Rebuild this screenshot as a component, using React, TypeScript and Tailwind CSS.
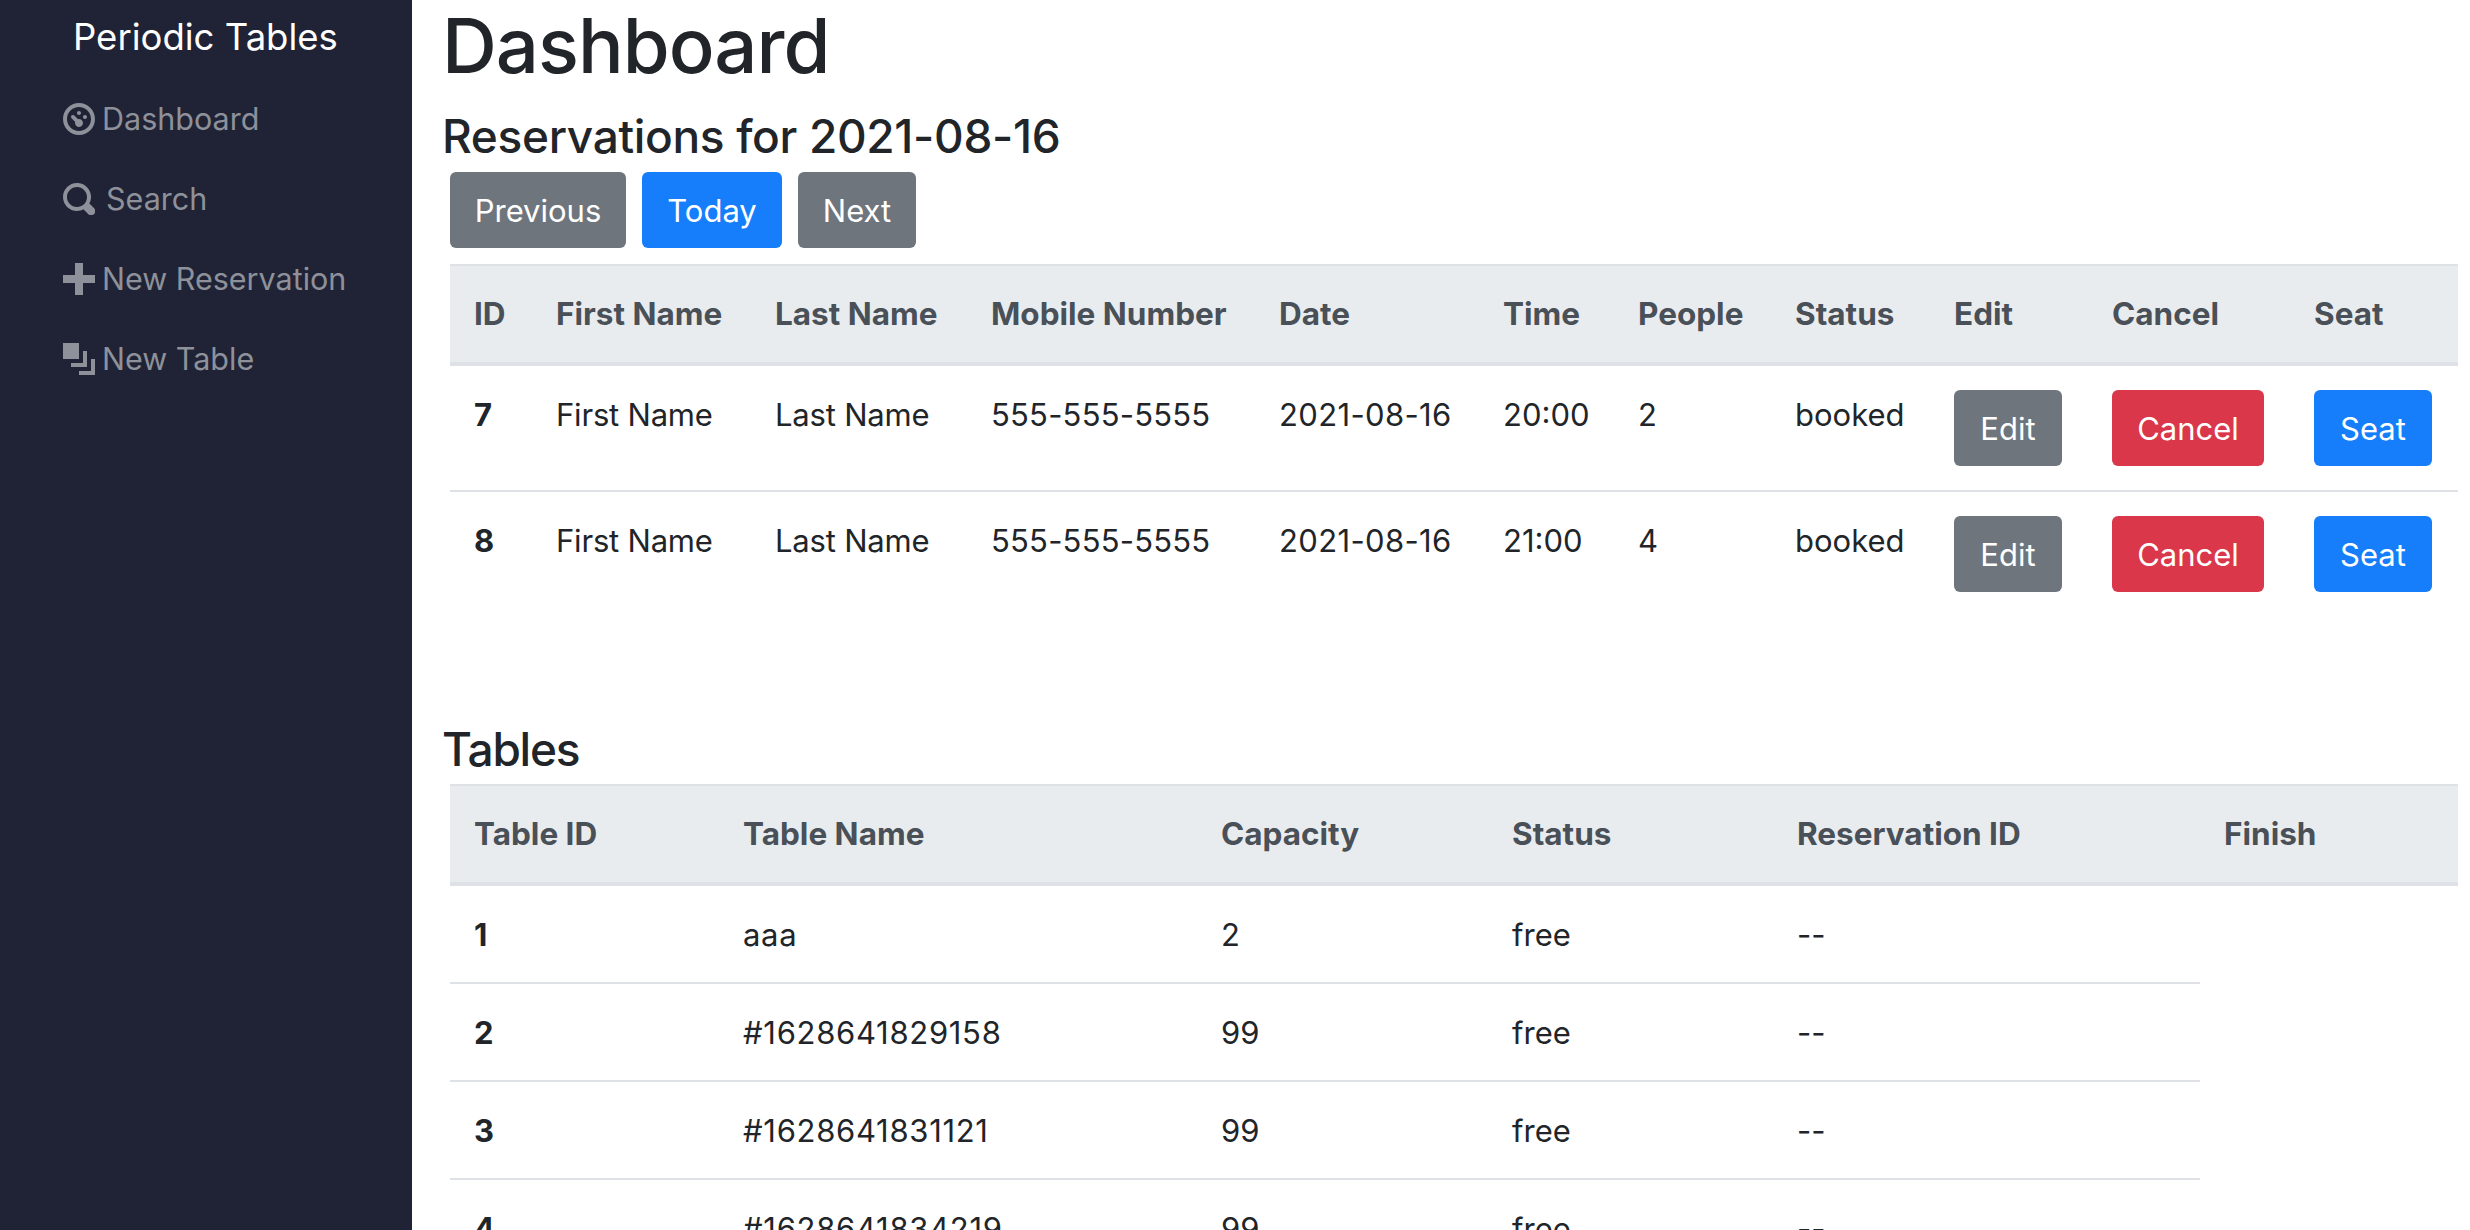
const FONT = "font-['Inter','Noto_Sans',sans-serif]";

const Dash = "M4 0c-2.2 0-4 1.8-4 4s1.8 4 4 4 4-1.8 4-4-1.8-4-4-4zm0 1c1.66 0 3 1.34 3 3s-1.34 3-3 3-3-1.34-3-3 1.34-3 3-3zm0 1c-.28 0-.5.22-.5.5s.22.5.5.5.5-.22.5-.5-.22-.5-.5-.5zm-1.66 1a.5.5 0 0 0-.19.84l.91.91c-.02.08-.06.16-.06.25 0 .55.45 1 1 1s1-.45 1-1-.45-1-1-1c-.09 0-.17.04-.25.06l-.91-.91a.5.5 0 0 0-.44-.16.5.5 0 0 0-.06 0zm3.16 0c-.28 0-.5.22-.5.5s.22.5.5.5.5-.22.5-.5-.22-.5-.5-.5z";
const Search = "M3.5 0c-1.93 0-3.5 1.57-3.5 3.5s1.57 3.5 3.5 3.5c.59 0 1.17-.14 1.66-.41a1 1 0 0 0 .13.13l1 1a1.02 1.02 0 1 0 1.44-1.44l-1-1a1 1 0 0 0-.16-.13c.27-.49.44-1.06.44-1.66 0-1.93-1.57-3.5-3.5-3.5zm0 1c1.39 0 2.5 1.11 2.5 2.5 0 .66-.24 1.27-.66 1.72-.01.01-.02.02-.03.03a1 1 0 0 0-.13.13c-.44.4-1.04.63-1.69.63-1.39 0-2.5-1.11-2.5-2.5s1.11-2.5 2.5-2.5z";
const Plus = "M3 0v3h-3v2h3v3h2v-3h3v-2h-3v-3h-2z";
const Layers = "M0 0v4h4v-4h-4zm5 2v3h-3v1h4v-4h-1zm2 2v3h-3v1h4v-4h-1z";

function NavItem({ d, label, gap }: { d: string; label: string; gap: string }) {
  return (
    <a className="flex h-[80px] items-center text-[30.5px] leading-[38px] text-[#8e919a]">
      <svg viewBox="0 0 8 8" className="h-8 w-8 shrink-0 fill-[#8e919a]">
        <path d={d} />
      </svg>
      <span className={gap}>{label}</span>
    </a>
  );
}

function Btn({ label, cls }: { label: string; cls: string }) {
  return (
    <button className={"h-[76px] rounded-md pt-0.5 text-center text-[31px] leading-[38px] text-white " + cls}>
      {label}
    </button>
  );
}

const thCls = "border-t-2 border-b-4 border-[#dee2e6] bg-[#e9ecef] py-[29px] pl-6 text-left align-top text-[31.5px] font-bold leading-[38px] text-[#495057]";
const tdBase = "pl-6 align-top text-[31px] leading-[38px] text-[#212529]";

function Td({ children, top, bold, extra }: { children: React.ReactNode; top: boolean; bold?: boolean; extra?: string }) {
  return (
    <td className={tdBase + " pb-[28px] pt-[30px] " + (top ? "border-t-2 border-[#dee2e6] " : "") + (bold ? "font-bold " : "") + (extra ?? "")}>
      {children}
    </td>
  );
}

function BtnTd({ label, cls, top }: { label: string; cls: string; top: boolean }) {
  return (
    <td className={tdBase + " py-6 " + (top ? "border-t-2 border-[#dee2e6]" : "")}>
      <Btn label={label} cls={cls} />
    </td>
  );
}

const reservations = [
  { id: "7", time: "20:00", people: "2" },
  { id: "8", time: "21:00", people: "4" },
];

const tables = [
  { id: "1", name: "aaa", cap: "2" },
  { id: "2", name: "#1628641829158", cap: "99" },
  { id: "3", name: "#1628641831121", cap: "99" },
  { id: "4", name: "#1628641834219", cap: "99" },
];

export default function App() {
  return (
    <div className={"flex h-screen overflow-hidden bg-white " + FONT}>
      <aside className="w-[412px] shrink-0 bg-[#1f2335] pl-[63px]">
        <div className="flex h-[73px] items-center pl-2.5 text-[36.5px] leading-[48px] text-white">Periodic Tables</div>
        <nav className="mt-1.5 flex flex-col">
          <NavItem d={Dash} label="Dashboard" gap="ml-[7px]" />
          <NavItem d={Search} label="Search" gap="ml-[11px]" />
          <NavItem d={Plus} label="New Reservation" gap="ml-[7px]" />
          <NavItem d={Layers} label="New Table" gap="ml-[7px]" />
        </nav>
      </aside>
      <main className="min-w-0 flex-1 pl-[30px] pr-3 pt-2">
        <h1 className="text-[76px] font-medium leading-[75px] tracking-[-1px] text-[#212529]">Dashboard</h1>
        <h4 className="mt-[31px] text-[46px] font-medium leading-[45px] tracking-[-0.33px] text-[#212529]">Reservations for 2021-08-16</h4>
        <div className="ml-2 mt-[13px] flex gap-4">
          <Btn label="Previous" cls="w-[176px] bg-[#6e757d]" />
          <Btn label="Today" cls="w-[140px] bg-[#167efb]" />
          <Btn label="Next" cls="w-[118px] bg-[#6e757d]" />
        </div>
        <table className="ml-2 mt-4 w-[2008px] table-fixed border-separate border-spacing-0">
          <thead>
            <tr>
              <th className={thCls + " w-[82px]"}>ID</th>
              <th className={thCls + " w-[219px]"}>First Name</th>
              <th className={thCls + " w-[216px]"}>Last Name</th>
              <th className={thCls + " w-[288px]"}>Mobile Number</th>
              <th className={thCls + " w-[224px]"}>Date</th>
              <th className={thCls + " w-[135px]"}>Time</th>
              <th className={thCls + " w-[157px]"}>People</th>
              <th className={thCls + " w-[159px]"}>Status</th>
              <th className={thCls + " w-[158px]"}>Edit</th>
              <th className={thCls + " w-[202px]"}>Cancel</th>
              <th className={thCls + " w-[168px]"}>Seat</th>
            </tr>
          </thead>
          <tbody>
            {reservations.map((r, i) => (
              <tr key={r.id}>
                <Td top={i > 0} bold>{r.id}</Td>
                <Td top={i > 0} extra="tracking-[-0.2px]">First Name</Td>
                <Td top={i > 0} extra="tracking-[-0.2px]">Last Name</Td>
                <Td top={i > 0} extra="tracking-[0.2px]">555-555-5555</Td>
                <Td top={i > 0} extra="tracking-[0.35px]">2021-08-16</Td>
                <Td top={i > 0}>{r.time}</Td>
                <Td top={i > 0}>{r.people}</Td>
                <Td top={i > 0}>booked</Td>
                <BtnTd top={i > 0} label="Edit" cls="w-[108px] bg-[#6e757d]" />
                <BtnTd top={i > 0} label="Cancel" cls="w-[152px] bg-[#da374a]" />
                <BtnTd top={i > 0} label="Seat" cls="w-[118px] bg-[#167efb]" />
              </tr>
            ))}
          </tbody>
        </table>
        <h4 className="mt-[111px] text-[46px] font-medium leading-[45px] tracking-[-1.2px] text-[#212529]">Tables</h4>
        <table className="ml-2 mt-3 w-[2008px] table-fixed border-separate border-spacing-0">
          <thead>
            <tr>
              <th className={thCls + " w-[269px]"}>Table ID</th>
              <th className={thCls + " w-[478px]"}>Table Name</th>
              <th className={thCls + " w-[291px]"}>Capacity</th>
              <th className={thCls + " w-[285px]"}>Status</th>
              <th className={thCls + " w-[427px]"}>Reservation ID</th>
              <th className={thCls + " w-[258px]"}>Finish</th>
            </tr>
          </thead>
          <tbody>
            {tables.map((t, i) => (
              <tr key={t.id}>
                <Td top={i > 0} bold>{t.id}</Td>
                <Td top={i > 0} extra="tracking-[0.7px]">{t.name}</Td>
                <Td top={i > 0}>{t.cap}</Td>
                <Td top={i > 0}>free</Td>
                <Td top={i > 0}>--</Td>
              </tr>
            ))}
          </tbody>
        </table>
      </main>
    </div>
  );
}
